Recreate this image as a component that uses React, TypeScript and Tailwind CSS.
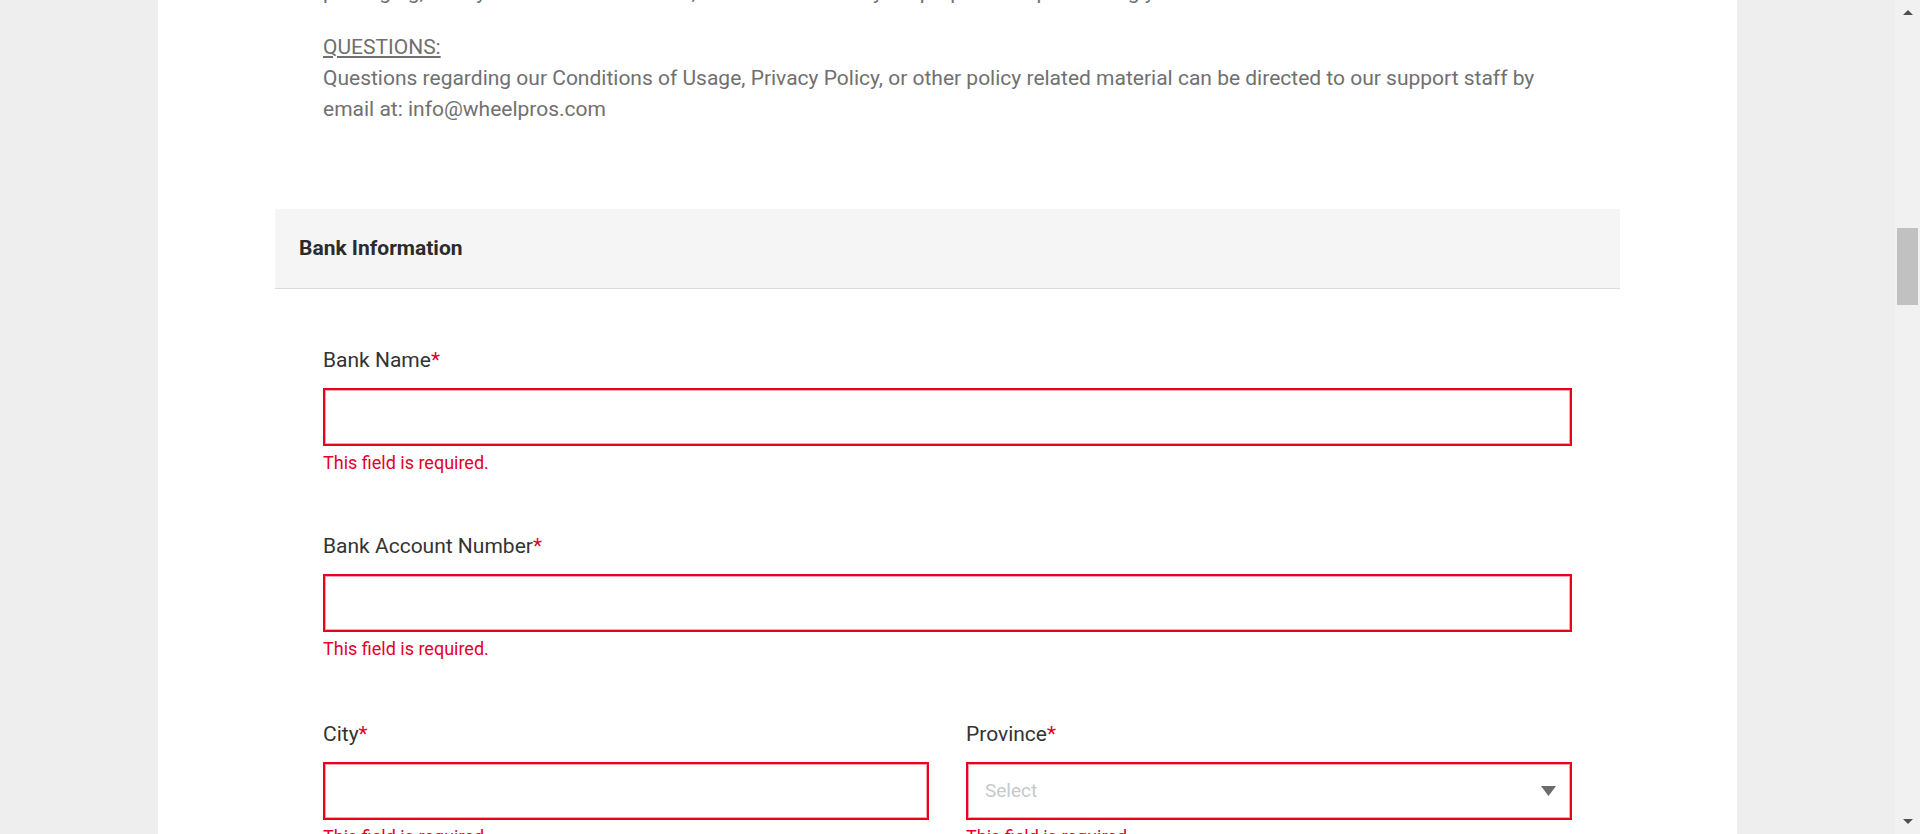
import React from "react";

function Label({ label }: { label: string }) {
  return (
    <div className="text-[21px] leading-[24px] text-[#333333]">
      {label}
      <span className="text-[#e4002b]">*</span>
    </div>
  );
}

function Field({ label, className = "" }: { label: string; className?: string }) {
  return (
    <div className={className}>
      <Label label={label} />
      <div className="mt-[16px] h-[58px] border-2 border-[#e8001c] bg-white shadow-[inset_0_0_0_1px_#f5a3ad]" />
      <div className="mt-[7px] text-[18px] leading-[20px] text-[#e4002b]">This field is required.</div>
    </div>
  );
}

function SelectField({ label }: { label: string }) {
  return (
    <div>
      <Label label={label} />
      <div className="mt-[16px] h-[58px] border-2 border-[#e8001c] bg-white shadow-[inset_0_0_0_1px_#f5a3ad] flex items-center justify-between pl-[17px] pr-[14px]">
        <span className="text-[19px] text-[#c5c9cc]">Select</span>
        <svg width="15" height="10" viewBox="0 0 15 10">
          <polygon points="0,0 15,0 7.5,10" fill="#6b6b6b" />
        </svg>
      </div>
      <div className="mt-[7px] text-[18px] leading-[20px] text-[#e4002b]">This field is required.</div>
    </div>
  );
}

export default function App() {
  return (
    <div className="h-[834px] w-[1920px] overflow-hidden flex font-['Roboto',sans-serif]">
      <div className="flex-1 bg-[#eeeeee] overflow-hidden">
        <div className="mx-auto w-[1579px] h-full bg-white px-[117px] flex flex-col">
          <div className="px-[48px] mt-[-23px] text-[21px] leading-[31px] text-[#707070]">
            <p className="mb-[24px]">
              packaging, or any other related material, shall be used solely for purposes of processing your order and
            </p>
            <p className="underline">QUESTIONS:</p>
            <p>
              Questions regarding our Conditions of Usage, Privacy Policy, or other policy related material can be directed to our support staff by email at: info@wheelpros.com
            </p>
          </div>

          <div className="mt-[84px] h-[80px] shrink-0 bg-[#f5f5f5] border-b border-[#dadada] flex items-center px-[24px]">
            <h2 className="text-[21px] font-bold text-[#2b2b2b]">Bank Information</h2>
          </div>

          <div className="px-[48px] pt-[59px]">
            <Field label="Bank Name" />
            <Field label="Bank Account Number" className="mt-[61px]" />
            <div className="mt-[63px] grid grid-cols-2 gap-[37px]">
              <Field label="City" />
              <SelectField label="Province" />
            </div>
          </div>
        </div>
      </div>
      <div className="w-[25px] bg-[#f1f1f1] flex flex-col items-center">
        <div className="mt-[10px] w-0 h-0 border-l-[5px] border-r-[5px] border-b-[5px] border-l-transparent border-r-transparent border-b-[#505050]" />
        <div className="mt-[213px] w-[21px] h-[77px] bg-[#c1c1c1]" />
        <div className="mt-auto mb-[10px] w-0 h-0 border-l-[5px] border-r-[5px] border-t-[5px] border-l-transparent border-r-transparent border-t-[#505050]" />
      </div>
    </div>
  );
}
